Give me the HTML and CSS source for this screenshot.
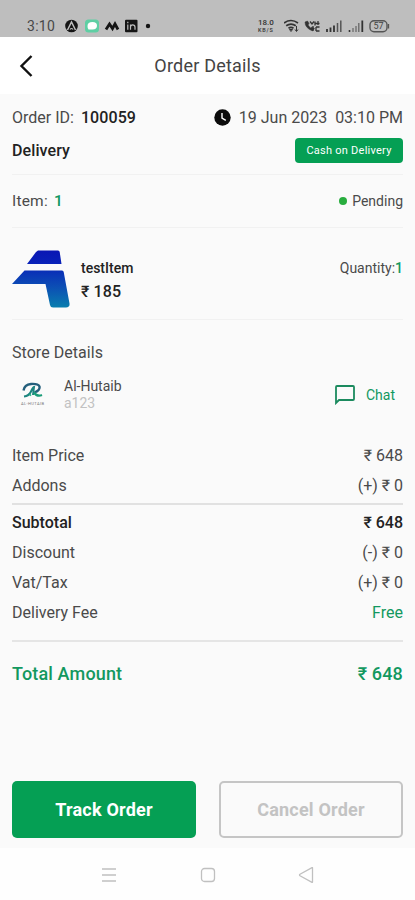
FILE: index.html
```html
<!DOCTYPE html>
<html lang="en">
<head>
<meta charset="utf-8">
<title>Order Details</title>
<link rel="stylesheet" href="styles.css">
</head>
<body>
<div class="screen">
  <div class="status">
    <span class="time">3:10</span>
    <svg class="apps" width="88" height="14" viewBox="0 0 88 14">
      <circle cx="6.500" cy="7" r="6.300" fill="#151515"/>
      <path d="M2.500 11 6.500 3l4 8" fill="none" stroke="#bebebe" stroke-width="1.500"/>
      <path d="M5 10.500q1.500-2 3 0" fill="none" stroke="#bebebe" stroke-width="1.200"/>
      <rect x="20" y="0.500" width="14" height="13" rx="3.500" fill="#5fcfa4"/>
      <path d="M22.500 7q0-4 5-4 4.500 0 4.500 3.500 0 4-4.500 4h-4q-1-1-1-3.500z" fill="#fff"/>
      <path d="M41 10.500 44.500 5l3 4.500L50 5l3 5.500" fill="none" stroke="#151515" stroke-width="2.800"/>
      <rect x="60" y="0.800" width="12.500" height="12.400" rx="1" fill="#151515"/>
      <path d="M62.800 5.500v5.300M62.800 2.800v1.400M65.500 10.800V5.500M65.500 8q0-2.200 2.200-2.200T70 8v2.800" fill="none" stroke="#bebebe" stroke-width="1.200"/>
      <circle cx="83" cy="7" r="2.200" fill="#151515"/>
    </svg>
    <div class="speed"><span>18.0</span><span>KB/S</span></div>
    <svg class="signals" width="108" height="14" viewBox="0 0 108 14" fill="none" stroke="#333">
      <path d="M0 4q7-5 14 0M2.200 6.800q4.800-3.500 9.600 0M4.500 9.300q2.500-1.800 5 0" stroke-width="1.700"/>
      <path d="M5.500 10.500h3L7 12.500zM12.500 7v5M11 10.500l1.500 2 1.500-2" stroke-width="1"/>
      <path d="M21 3q0 6 7.500 9l2-2.500-2.500-1.500-1.500 1-2.500-3 1-1.500L23.500 2z" fill="#333" stroke-width=".5"/>
      <path d="M26 2.500l2 2.500 2-2.500M31 2.500v4M34 2v4M31.500 4.500h4M32 8h3.500M32 12h3.500M32 8v4M29 7v5" stroke-width="1.300"/>
      <path d="M43 10v3M46.500 8.500V13M50 6.500V13" stroke-width="1.800"/>
      <path d="M53.500 4v9M56.800 1.500V13" stroke="#555" stroke-width="1.500"/>
      <path d="M65.500 11v2" stroke-width="1.600"/><path d="M69 9v4M72 7v6" stroke="#777" stroke-width="1.500"/><path d="M74.800 4v9" stroke="#666" stroke-width="1.300"/><path d="M78.300 1.500V13" stroke-width="1.800"/>
      <rect x="86" y="1.700" width="17" height="11" rx="4" stroke="#555" stroke-width="1.400"/>
      <path d="M104.500 5v4.500" stroke="#555" stroke-width="1.300"/>
      <text x="94.500" y="10.400" text-anchor="middle" class="battery">57</text>
    </svg>
  </div>
  <header class="bar">
    <svg class="back" width="15" height="22" viewBox="0 0 15 22"><path d="M12.500 1 2.500 11l10 10" fill="none" stroke="#111" stroke-width="2.400"/></svg>
    <h1>Order Details</h1>
  </header>
  <main>
    <div class="row order"><span>Order ID: <b class="id">100059</b></span>
      <span class="date"><svg width="17" height="17" viewBox="0 0 17 17"><circle cx="8.500" cy="8.500" r="8.200" fill="#0c0c0c"/><path d="M8 4v5l3.800 2.300" fill="none" stroke="#fff" stroke-width="1.400"/></svg><span class="datetime">19 Jun 2023&nbsp; 03:10 PM</span></span></div>
    <div class="row delivery"><b>Delivery</b><span class="badge">Cash on Delivery</span></div>
    <div class="row items"><span>Item: <b class="count">1</b></span><span class="pending"><i class="dot"></i>Pending</span></div>
    <div class="product">
      <svg width="58" height="58" viewBox="0 0 58 58">
        <defs><linearGradient id="g" x1="0" y1="0" x2="0" y2="58" gradientUnits="userSpaceOnUse"><stop offset="0" stop-color="#0a16b4"/><stop offset=".25" stop-color="#0822b8"/><stop offset=".65" stop-color="#0c50b4"/><stop offset="1" stop-color="#087fae"/></linearGradient></defs>
        <path fill="url(#g)" d="M26 .5h20q1.500 0 1.700 1.500L49.500 14H15L24 2zM12.500 20.500H50q1.500 0 1.700 1.500L57.500 53.500q.5 4-3.500 4H41q-2.500 0-3-2.500L33.500 34H0z"/>
      </svg>
      <div class="info"><span class="name">testItem</span><span class="price">₹ 185</span></div>
      <span class="qty">Quantity:<b>1</b></span>
    </div>
    <h2>Store Details</h2>
    <div class="store">
      <svg width="26" height="26" viewBox="0 0 26 26" fill="none">
        <path d="M3.500 8.500Q4.500 2.500 11 2q7-.5 8.500 2.500 1 3.500-5 6" stroke="#245f7c" stroke-width="2.400"/>
        <path d="M4 14.500q5-.5 7-5t3-4.500l-1 8" stroke="#1d8580" stroke-width="2"/>
        <path d="M14 10.500q3 4.500 8 2.500" stroke="#199c78" stroke-width="2.300"/>
        <path d="M9.500 13.500l1.500-1" stroke="#2bb487" stroke-width="2"/>
        <text x="1" y="23" class="mark" textLength="23">AL-HUTAIB</text>
      </svg>
      <div class="owner"><span>Al-Hutaib</span><span class="code">a123</span></div>
      <span class="chat"><svg width="20" height="20" viewBox="0 0 20 20"><path d="M1 18V2q0-1 1-1h16q1 0 1 1v12q0 1-1 1H4z" fill="none" stroke="#1b8a5e" stroke-width="1.800"/></svg>Chat</span>
    </div>
    <div class="line"><span>Item Price</span><span class="amt">₹ 648</span></div>
    <div class="line"><span>Addons</span><span class="amt">(+) ₹ 0</span></div>
    <hr class="sub">
    <div class="line strong"><span>Subtotal</span><span class="amt">₹ 648</span></div>
    <div class="line"><span>Discount</span><span class="amt">(-) ₹ 0</span></div>
    <div class="line"><span>Vat/Tax</span><span class="amt">(+) ₹ 0</span></div>
    <div class="line"><span>Delivery Fee</span><span class="free">Free</span></div>
    <hr class="end">
    <div class="total"><span>Total Amount</span><span class="sum">₹ 648</span></div>
    <div class="actions"><button class="track">Track Order</button><button class="cancel">Cancel Order</button></div>
  </main>
  <nav>
    <svg width="16" height="16" viewBox="0 0 16 16"><path d="M1 2h14M1 8h14M1 14h14"/></svg>
    <svg width="16" height="16" viewBox="0 0 16 16"><rect x="1.500" y="1.500" width="13" height="13" rx="3"/></svg>
    <svg width="16" height="16" viewBox="0 0 16 16"><path d="M14.500 1v14q0 .5-.5.300L2 8.800q-1-.8 0-1.600L14 .7q.5-.2.500.3z"/></svg>
  </nav>
</div>
</body>
</html>
```
FILE: styles.css
```css
* { box-sizing: border-box; margin: 0; padding: 0; }
body { font-family: Roboto, "Noto Sans", sans-serif; background: #fff; color: #4a4a4a; }
.screen { width: 415px; height: 900px; overflow: hidden; display: flex; flex-direction: column; }
.status { height: 37px; background: #bebebe; display: flex; align-items: center; padding: 15px 23px 0 27px; color: #484848; }
.time { font-size: 14px; letter-spacing: .3px; width: 38px; }
.speed { display: flex; flex-direction: column; margin-left: auto; margin-right: 8px; width: 18px; font-size: 8px; line-height: 8px; font-weight: 500; color: #333; }
.speed span + span { font-size: 5.500px; line-height: 6px; letter-spacing: .8px; }
.battery { font-size: 9px; fill: #444; stroke: none; }
.bar { height: 57px; display: flex; align-items: center; padding: 0 19px; }
.bar h1 { flex: 1; text-align: center; font-size: 18px; font-weight: 400; color: #444; letter-spacing: .2px; padding-right: 15px; }
main { height: 754px; background: #fafafa; padding: 8px 12px 0; display: flex; flex-direction: column; }
.row { display: flex; justify-content: space-between; align-items: center; font-size: 15px; }
.order { height: 31px; font-size: 16px; }
.id { font-weight: 500; margin-left: 3px; color: #222; letter-spacing: .1px; }
.date { display: flex; align-items: center; gap: 8px; }
.delivery { height: 42px; padding-bottom: 6px; border-bottom: 1px solid #f1f1f1; font-size: 16px; color: #222; }
.delivery b { font-weight: 500; letter-spacing: .1px; }
.badge { width: 108px; height: 25px; border-radius: 4px; background: #059f54; color: #fff; font-size: 11px; letter-spacing: .25px; display: flex; align-items: center; justify-content: center; }
.items { height: 53px; border-bottom: 1px solid #f1f1f1; font-size: 15.500px; letter-spacing: .2px; }
.count { margin-left: 2px; color: #12985f; font-weight: 500; }
.pending { display: flex; align-items: center; font-size: 14px; letter-spacing: 0; }
.dot { width: 8px; height: 8px; border-radius: 50%; background: #28ad3e; margin-right: 5px; }
.product { height: 92px; display: flex; padding-top: 22px; border-bottom: 1px solid #f1f1f1; }
.info { margin-left: 11px; display: flex; flex-direction: column; padding-top: 7px; color: #222; }
.name { font-size: 14px; line-height: 22px; font-weight: 500; }
.price { font-size: 16px; line-height: 25px; font-weight: 500; letter-spacing: .1px; }
.qty { margin-left: auto; font-size: 14px; line-height: 22px; padding-top: 7px; }
.qty b { color: #12985f; font-weight: 500; }
h2 { font-size: 16px; font-weight: 400; line-height: 24px; margin-top: 21px; letter-spacing: .05px; }
.store { height: 50px; margin-top: 5px; display: flex; align-items: center; padding: 0 8px; }
.mark { font-size: 4px; fill: #777; }
.owner { margin-left: 18px; font-size: 14px; line-height: 17px; display: flex; flex-direction: column; }
.code { color: #c2c2c2; }
.chat { margin-left: auto; display: flex; align-items: center; gap: 11px; font-size: 14px; color: #12985f; }
.store + .line { margin-top: 20px; }
.line { height: 30px; flex: none; display: flex; justify-content: space-between; align-items: center; font-size: 16px; }
.strong { color: #222; font-weight: 500; }
.free { color: #12985f; }
hr { border: 0; height: 2px; background: #e1e1e1; flex: none; }
.sub { margin: 3px 0 2px; }
.end { margin: 13px 0 16px; background: #e5e5e5; }
.total { height: 30px; display: flex; justify-content: space-between; align-items: center; font-size: 18px; font-weight: 500; color: #12985f; letter-spacing: .15px; }
.actions { margin-top: 93px; display: grid; grid-template-columns: 1fr 1fr; gap: 23px; height: 57px; flex: none; }
button { font: 700 18px Roboto, sans-serif; letter-spacing: .2px; border-radius: 5px; border: 0; }
.track { background: #059f54; color: #fff; }
.cancel { background: #fafafa; color: #c3c3c3; border: 2px solid #c5c5c5; }
nav { height: 52px; display: flex; align-items: center; justify-content: space-between; padding: 2px 101px 0; background: #fefefe; }
nav svg { fill: none; stroke: #c0c0c0; stroke-width: 1.300; }
```
